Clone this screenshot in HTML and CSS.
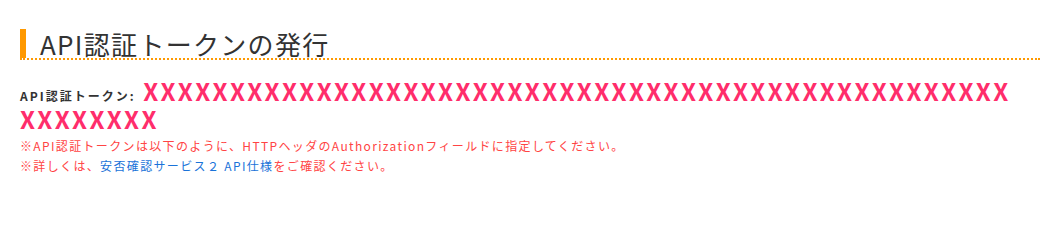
FILE: index.html
```html
<!DOCTYPE html>
<html lang="ja">
<head>
<meta charset="utf-8">
<link rel="stylesheet" href="styles.css">
</head>
<body>
<div class="page">
  <h2 class="title">API認証トークンの発行</h2>
  <div class="token-row">
    <span class="label">API認証トークン:</span>
    <span class="token">XXXXXXXXXXXXXXXXXXXXXXXXXXXXXXXXXXXXXXXXXXXXXXXXXXXXXXXXXX</span>
  </div>
  <p class="note">※API認証トークンは以下のように、HTTPヘッダのAuthorizationフィールドに指定してください。</p>
  <p class="note">※詳しくは、<a class="link" href="#">安否確認サービス２ API仕様</a>をご確認ください。</p>
</div>
</body>
</html>
```

FILE: styles.css
```css
html, body {
  margin: 0;
  padding: 0;
  background: #fff;
}
body {
  font-family: "Noto Sans CJK JP", "Noto Sans", sans-serif;
  color: #333;
}
.page {
  padding: 29px 20px 0 20px;
}
.title {
  margin: 0;
  font-size: 26px;
  font-weight: normal;
  line-height: 29px;
  letter-spacing: 1.3px;
  color: #333;
  border-left: 6px solid #ff9900;
  padding-left: 14px;
  position: relative;
}
.title::after {
  content: "";
  position: absolute;
  left: -6px;
  right: 0;
  bottom: -2px;
  border-bottom: 2px dotted #ff9900;
}
.token-row {
  margin-top: 21px;
  margin-right: 25px;
  line-height: 23px;
  word-break: break-all;
}
.label {
  font-size: 12px;
  font-weight: bold;
  letter-spacing: 2px;
  color: #333;
  margin-right: 4px;
}
.token {
  font-size: 24px;
  font-weight: bold;
  letter-spacing: 2.3px;
  color: #ff2d6b;
}
.note {
  margin: 0;
  font-size: 12px;
  line-height: 19px;
  letter-spacing: 1.35px;
  color: #ff4444;
}
.token-row + .note {
  margin-top: 2px;
}
.note + .note {
  margin-top: 1px;
}
.link {
  color: #1a73d9;
  text-decoration: none;
}
```
